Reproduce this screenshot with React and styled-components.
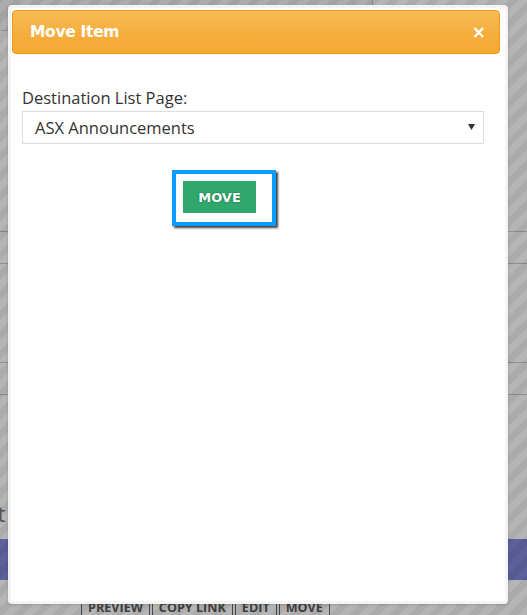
import React from 'react'
import styled, { createGlobalStyle } from 'styled-components'

const GlobalStyle = createGlobalStyle`
  html, body { margin: 0; padding: 0; }
  body {
    width: 527px;
    height: 615px;
    overflow: hidden;
    font-family: "Open Sans", "DejaVu Sans", sans-serif;
  }
`

const tabs = ['PREVIEW', 'COPY LINK', 'EDIT', 'MOVE']

export default function App() {
  return (
    <>
      <GlobalStyle />
      <Page>
        <TopPanel />
        <Spacer h={200} />
        <RowLine />
        <Spacer h={31} />
        <RowLine />
        <Spacer h={98} />
        <RowLine />
        <Spacer h={31} />
        <RowLine />
        <Spacer h={106} />
        <BackText>
          <span>List</span>
        </BackText>
        <Spacer h={14} />
        <PurpleBar />
        <Spacer h={18} />
        <TabRow>
          {tabs.map((t) => (
            <Tab key={t}>{t}</Tab>
          ))}
        </TabRow>
        <Backdrop />
        <Dialog>
          <Header>
            <Title>Move Item</Title>
            <Close>×</Close>
          </Header>
          <Body>
            <Label>Destination List Page:</Label>
            <SelectBox>
              <span>ASX Announcements</span>
              <Caret>
                <svg width="7" height="6" viewBox="0 0 7 6">
                  <path d="M0 0 H7 L3.5 6 Z" fill="#333" />
                </svg>
              </Caret>
            </SelectBox>
            <FocusRing>
              <MoveButton>MOVE</MoveButton>
            </FocusRing>
          </Body>
        </Dialog>
      </Page>
    </>
  )
}

const Page = styled.div`
  position: relative;
  width: 527px;
  height: 615px;
  overflow: hidden;
  background: #fff;
  display: flex;
  flex-direction: column;
`
const TopPanel = styled.div`
  width: 372px;
  height: 30px;
  border-bottom: 1px solid #d8d8d8;
  border-right: 1px solid #ccc;
  background: #f2f2f2;
  flex: none;
`
const Spacer = styled.div`
  height: ${(p) => p.h}px;
  flex: none;
`
const RowLine = styled.div`
  height: 1px;
  background: #c8c8c8;
  flex: none;
`
const BackText = styled.div`
  height: 24px;
  font-size: 22px;
  line-height: 24px;
  color: #777;
  flex: none;
  span {
    margin-left: -30px;
  }
`
const PurpleBar = styled.div`
  height: 41px;
  background: #8187da;
  flex: none;
`
const TabRow = styled.div`
  display: flex;
  gap: 2px;
  padding-left: 81px;
  flex: none;
`
const Tab = styled.div`
  border-left: 1px solid #666;
  border-right: 1px solid #666;
  padding: 0 6px;
  font-size: 12.6px;
  font-weight: 700;
  color: #5a5a5a;
  line-height: 20px;
`
const Backdrop = styled.div`
  position: absolute;
  inset: 0;
  background: repeating-linear-gradient(
    -45deg,
    rgba(0, 0, 0, 0.29) 0 7px,
    rgba(0, 0, 0, 0.33) 7px 14px
  );
`
const Dialog = styled.div`
  position: absolute;
  left: 8px;
  top: 5px;
  width: 500px;
  height: 599px;
  box-sizing: border-box;
  background: #fff;
  border: 3px solid #f4f4f4;
  border-radius: 4px;
  padding: 2px 5px 0 1px;
  box-shadow: 0 1px 3px rgba(0, 0, 0, 0.15);
`
const Header = styled.div`
  height: 44px;
  box-sizing: border-box;
  display: flex;
  align-items: center;
  justify-content: space-between;
  padding: 0 13px 0 17px;
  border: 1px solid #ea9a17;
  border-radius: 4px;
  background: linear-gradient(#f9ba57, #f6ad3c 55%, #f5a933);
`
const Title = styled.h1`
  margin: 0;
  font-family: "DejaVu Sans", sans-serif;
  font-size: 15.5px;
  font-weight: 700;
  color: #fff;
  letter-spacing: -0.3px;
`
const Close = styled.span`
  font-family: "DejaVu Sans", sans-serif;
  font-size: 17px;
  font-weight: 700;
  color: #fff;
  line-height: 1;
`
const Body = styled.div`
  padding: 33px 16px 0 10px;
  display: flex;
  flex-direction: column;
  align-items: flex-start;
`
const Label = styled.label`
  font-size: 16.5px;
  line-height: 22px;
  color: #333;
  margin-bottom: 2px;
`
const SelectBox = styled.div`
  align-self: stretch;
  height: 33px;
  box-sizing: border-box;
  border: 1px solid #dcdcdc;
  display: flex;
  align-items: center;
  justify-content: space-between;
  padding: 0 8px 0 12px;
  font-size: 16.5px;
  color: #333;
`
const Caret = styled.span`
  display: flex;
  margin-top: -1px;
`
const FocusRing = styled.div`
  margin: 26px 0 0 150px;
  border: 4px solid #0a9cff;
  padding: 7px 16px 9px 7px;
  box-shadow: 2px 2px 2px rgba(0, 0, 0, 0.75);
`
const MoveButton = styled.button`
  width: 73px;
  height: 32px;
  border: none;
  background: #2fa76d;
  color: #fff;
  font-family: "DejaVu Sans", sans-serif;
  font-size: 13px;
  font-weight: 700;
  text-shadow: 0 0 2px rgba(0, 0, 0, 0.4);
  padding: 0;
`
